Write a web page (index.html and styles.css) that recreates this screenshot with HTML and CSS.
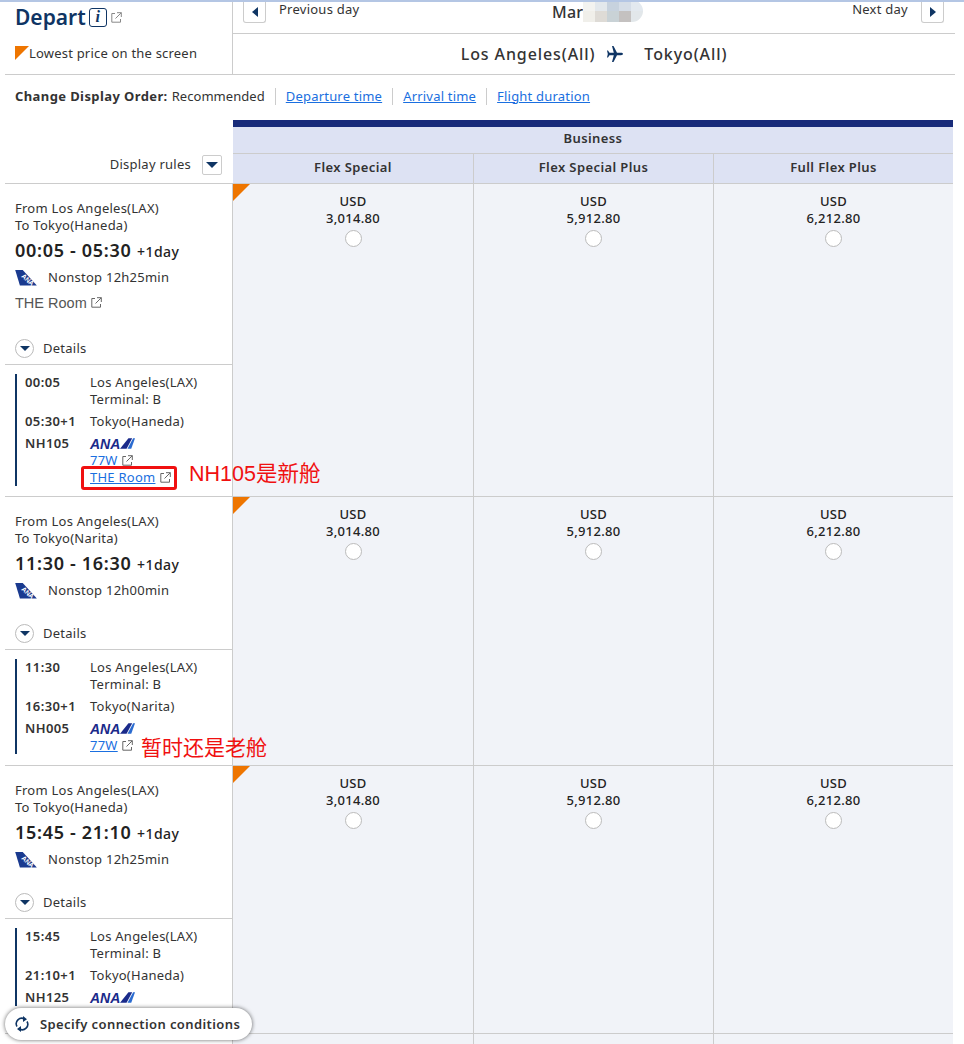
FILE: index.html
```html
<!DOCTYPE html>
<html lang="en">
<head>
    <meta charset="UTF-8">
    <meta name="viewport" content="width=device-width, initial-scale=1.0">
    <title>Select flights</title>
    <link rel="stylesheet" href="styles.css">
</head>
<body>
<div class="page">

    <div class="top">
        <div class="top-left">
            <div class="depart">
                <h1>Depart</h1>
                <span class="info-btn">i</span>
                <svg class="ext ext-pale" viewBox="0 0 11 11"><path d="M4 1.500H.8v8.700h8.700V7M6 .7h4.300V5M10.300.7 4.500 6.500"/></svg>
            </div>
            <div class="legend"><span class="corner corner-small"></span>Lowest price on the screen</div>
        </div>
        <div class="top-right">
            <div class="day-nav">
                <div class="day-prev"><span class="day-btn"><span class="arrow-left"></span></span>Previous day</div>
                <div class="day-now">Mar</div>
                <div class="day-next">Next day<span class="day-btn"><span class="arrow-right"></span></span></div>
            </div>
            <div class="route">
                <span>Los Angeles(All)</span>
                <svg class="plane" viewBox="0 0 16 16"><path d="M16 8c0-.7-1-1.200-2-1.200H10L6.500 0H5l1.800 6.800H2.500L1 4.500H0l.8 3.500L0 11.500h1l1.500-2.300h4.300L5 16h1.500L10 9.200h4c1 0 2-.5 2-1.200z"/></svg>
                <span>Tokyo(All)</span>
            </div>
        </div>
    </div>

    <!-- blurred date -->
    <div class="mosaic">
        <i class="m1"></i><i class="m2"></i><i class="m3"></i><i class="m4"></i><i class="m5"></i>
        <i class="m6"></i><i class="m7"></i><i class="m8"></i><i class="m9"></i><i class="m10"></i>
    </div>

    <div class="order">
        <b>Change Display Order:</b>
        <span class="order-item order-first">Recommended</span>
        <a href="#" class="order-item">Departure time</a>
        <a href="#" class="order-item">Arrival time</a>
        <a href="#" class="order-item order-last">Flight duration</a>
    </div>

    <div class="thead">
        <div class="rules">Display rules<span class="rules-btn"><span class="arrow-down"></span></span></div>
        <div class="thead-right">
            <div class="cabin">Business</div>
            <div class="fares">
                <div>Flex Special</div>
                <div>Flex Special Plus</div>
                <div>Full Flex Plus</div>
            </div>
        </div>
    </div>

    <!-- NH105 -->
    <div class="flight flight-tall">
        <div class="info">
            <div class="summary">
                <p>From Los Angeles(LAX)<br>To Tokyo(Haneda)</p>
                <div class="times">00:05 - 05:30 <small>+1day</small></div>
                <div class="carrier">
                    <svg class="tail" viewBox="0 0 24 17"><path d="M0 0h8l15 16.500H5z"/><text x="7" y="9" transform="rotate(42 9 7)">ANA</text></svg>
                    Nonstop 12h25min
                </div>
                <div class="room">THE Room <svg class="ext" viewBox="0 0 11 11"><path d="M4 1.500H.8v8.700h8.700V7M6 .7h4.300V5M10.300.7 4.500 6.500"/></svg></div>
                <div class="toggle"><span class="toggle-btn"><span class="arrow-down"></span></span>Details</div>
            </div>
            <div class="legs">
                <div class="leg"><b>00:05</b><span>Los Angeles(LAX)<br>Terminal: B</span></div>
                <div class="leg leg-arr"><b>05:30+1</b><span>Tokyo(Haneda)</span></div>
                <div class="leg leg-arr">
                    <b>NH105</b>
                    <div>
                        <div class="ana"><span>ANA</span><svg viewBox="0 0 16 11"><path d="M8 11 14 0h2l-4 11z" fill="#2a6bd0"/><path d="M0 11 9 0h4L7 11z" fill="#1a2a8a"/></svg></div>
                        <div class="plane-link"><a href="#">77W</a> <svg class="ext" viewBox="0 0 11 11"><path d="M4 1.500H.8v8.700h8.700V7M6 .7h4.300V5M10.300.7 4.500 6.500"/></svg></div>
                        <div class="plane-link"><a href="#">THE Room</a> <svg class="ext" viewBox="0 0 11 11"><path d="M4 1.500H.8v8.700h8.700V7M6 .7h4.300V5M10.300.7 4.500 6.500"/></svg></div>
                    </div>
                </div>
            </div>
        </div>
        <div class="price best">USD<br>3,014.80<span class="radio"></span></div>
        <div class="price">USD<br>5,912.80<span class="radio"></span></div>
        <div class="price">USD<br>6,212.80<span class="radio"></span></div>
    </div>

    <!-- NH005 -->
    <div class="flight flight-mid">
        <div class="info">
            <div class="summary summary-short">
                <p>From Los Angeles(LAX)<br>To Tokyo(Narita)</p>
                <div class="times">11:30 - 16:30 <small>+1day</small></div>
                <div class="carrier">
                    <svg class="tail" viewBox="0 0 24 17"><path d="M0 0h8l15 16.500H5z"/><text x="7" y="9" transform="rotate(42 9 7)">ANA</text></svg>
                    Nonstop 12h00min
                </div>
                <div class="toggle"><span class="toggle-btn"><span class="arrow-down"></span></span>Details</div>
            </div>
            <div class="legs">
                <div class="leg"><b>11:30</b><span>Los Angeles(LAX)<br>Terminal: B</span></div>
                <div class="leg leg-arr"><b>16:30+1</b><span>Tokyo(Narita)</span></div>
                <div class="leg leg-arr">
                    <b>NH005</b>
                    <div>
                        <div class="ana"><span>ANA</span><svg viewBox="0 0 16 11"><path d="M8 11 14 0h2l-4 11z" fill="#2a6bd0"/><path d="M0 11 9 0h4L7 11z" fill="#1a2a8a"/></svg></div>
                        <div class="plane-link"><a href="#">77W</a> <svg class="ext" viewBox="0 0 11 11"><path d="M4 1.500H.8v8.700h8.700V7M6 .7h4.300V5M10.300.7 4.500 6.500"/></svg></div>
                    </div>
                </div>
            </div>
        </div>
        <div class="price best">USD<br>3,014.80<span class="radio"></span></div>
        <div class="price">USD<br>5,912.80<span class="radio"></span></div>
        <div class="price">USD<br>6,212.80<span class="radio"></span></div>
    </div>

    <!-- NH125 -->
    <div class="flight flight-last">
        <div class="info">
            <div class="summary summary-short">
                <p>From Los Angeles(LAX)<br>To Tokyo(Haneda)</p>
                <div class="times">15:45 - 21:10 <small>+1day</small></div>
                <div class="carrier">
                    <svg class="tail" viewBox="0 0 24 17"><path d="M0 0h8l15 16.500H5z"/><text x="7" y="9" transform="rotate(42 9 7)">ANA</text></svg>
                    Nonstop 12h25min
                </div>
                <div class="toggle"><span class="toggle-btn"><span class="arrow-down"></span></span>Details</div>
            </div>
            <div class="legs">
                <div class="leg"><b>15:45</b><span>Los Angeles(LAX)<br>Terminal: B</span></div>
                <div class="leg leg-arr"><b>21:10+1</b><span>Tokyo(Haneda)</span></div>
                <div class="leg leg-arr">
                    <b>NH125</b>
                    <div>
                        <div class="ana"><span>ANA</span><svg viewBox="0 0 16 11"><path d="M8 11 14 0h2l-4 11z" fill="#2a6bd0"/><path d="M0 11 9 0h4L7 11z" fill="#1a2a8a"/></svg></div>
                    </div>
                </div>
            </div>
        </div>
        <div class="price best">USD<br>3,014.80<span class="radio"></span></div>
        <div class="price">USD<br>5,912.80<span class="radio"></span></div>
        <div class="price">USD<br>6,212.80<span class="radio"></span></div>
    </div>

    <div class="flight flight-empty">
        <div class="info"></div>
        <div class="price"></div>
        <div class="price"></div>
        <div class="price"></div>
    </div>

    <!-- hand-written notes on top of the list -->
    <div class="note-box"></div>
    <div class="note note-new">NH105是新舱</div>
    <div class="note note-old">暂时还是老舱</div>

    <div class="connect">
        <svg viewBox="0 0 14 16"><path d="M2 10.500A5.500 5.500 0 0 1 9.500 3M12 5.500A5.500 5.500 0 0 1 4.500 13"/><path class="tip" d="M8 0l4 3.300L8 6zM6 10l-4 3 4 3z"/></svg>
        Specify connection conditions
    </div>
</div>
</body>
</html>
```

FILE: styles.css
```css
* {
  box-sizing: border-box;
}

body {
  margin: 0;
  font-family: "Noto Sans", "Noto Sans CJK SC", sans-serif;
  font-size: 13px;
  letter-spacing: 0.25px;
  color: #333;
  background: #fff;
}

a {
  color: #1a6fe0;
}

b {
  letter-spacing: 0.4px;
}

p {
  margin: 0;
}

.page {
  position: relative;
  height: 1044px;
  padding-left: 5px;
  border-top: 2px solid #b4c6e4;
  overflow: hidden;
}

/* top block */
.top {
  display: flex;
  width: 950px;
  height: 73px;
  border-bottom: 1px solid #ccc;
}

.top-left {
  width: 228px;
  padding: 0 0 0 10px;
  border-right: 1px solid #ccc;
}

.depart {
  display: flex;
  align-items: center;
  height: 30px;
}

h1 {
  margin: 0 3px 0 0;
  font-size: 21px;
  font-weight: 600;
  letter-spacing: 0;
  color: #0f3564;
}

.info-btn {
  width: 18px;
  height: 19px;
  border: 1.5px solid #0f3564;
  border-radius: 3px;
  font: italic bold 16px/16px "Liberation Serif", serif;
  text-align: center;
  color: #0f3564;
}

.ext {
  width: 11px;
  height: 11px;
  fill: none;
  stroke: #666;
  stroke-width: 1;
}

.ext-pale {
  margin-left: 4px;
  stroke: #888;
}

.legend {
  display: flex;
  align-items: center;
  margin-top: 12px;
  letter-spacing: 0.2px;
  color: #333;
}

.corner {
  display: block;
  width: 0;
  height: 0;
  border-top: 17px solid #ee7500;
  border-right: 17px solid transparent;
}

.corner-small {
  border-top-width: 14px;
  border-right-width: 14px;
}

.top-right {
  flex: 1;
}

.day-nav {
  position: relative;
  display: flex;
  justify-content: space-between;
  height: 32px;
  padding: 0 11px 0 10px;
  border-bottom: 1px solid #ccc;
}

.day-prev,
.day-next {
  display: flex;
  align-items: flex-start;
  gap: 13px;
  line-height: 14px;
}

.day-btn {
  display: flex;
  align-items: center;
  justify-content: center;
  width: 23px;
  height: 21px;
  border: 1px solid #ccc;
  border-top: none;
  border-radius: 0 0 3px 3px;
}

.arrow-left {
  border-top: 5px solid transparent;
  border-bottom: 5px solid transparent;
  border-right: 6px solid #0f3564;
}

.arrow-right {
  border-top: 5px solid transparent;
  border-bottom: 5px solid transparent;
  border-left: 6px solid #0f3564;
}

.arrow-down {
  border-left: 6px solid transparent;
  border-right: 6px solid transparent;
  border-top: 6px solid #0f3564;
}

.day-now {
  position: absolute;
  left: 319px;
  top: 0;
  font-size: 16px;
  font-weight: 500;
  line-height: 20px;
}

.route {
  display: flex;
  align-items: center;
  justify-content: center;
  gap: 14px;
  height: 40px;
  font-size: 16px;
  font-weight: 500;
  letter-spacing: 0.9px;
}

.plane {
  width: 16px;
  height: 16px;
  margin: 0 7px 0 -2px;
  fill: #0f3564;
}

.mosaic {
  position: absolute;
  left: 583px;
  top: -2px;
  display: grid;
  grid-template-columns: repeat(5, 12px);
  grid-template-rows: repeat(2, 11px);
  border-radius: 0 14px 14px 0;
  overflow: hidden;
}

.m1 { background: #f3f3f0; }
.m2 { background: #e3e8ec; }
.m3 { background: #c7d2de; }
.m4 { background: #d5dde7; }
.m5 { background: #e3e9ef; }
.m6 { background: #f0efea; }
.m7 { background: #dedbd6; }
.m8 { background: #c9d2d6; }
.m9 { background: #c4c1c0; }
.m10 { background: #e2e7ea; }

/* sort order */
.order {
  display: flex;
  align-items: center;
  height: 45px;
  padding: 0 0 3px 10px;
}

.order b {
  margin-right: 4px;
}

.order-item {
  padding-right: 10px;
  margin-right: 10px;
  border-right: 1px solid #ccc;
  letter-spacing: 0.05px;
  line-height: 17px;
}

a.order-item {
  letter-spacing: 0.2px;
}

.order-last {
  border-right: none;
}

/* table head */
.thead {
  display: flex;
  width: 948px;
  height: 64px;
}

.rules {
  display: flex;
  align-items: flex-start;
  justify-content: flex-end;
  gap: 11px;
  width: 228px;
  padding: 35px 11px 0 0;
  line-height: 19px;
  border-bottom: 1px solid #ccc;
}

.rules-btn {
  display: flex;
  align-items: center;
  justify-content: center;
  width: 20px;
  height: 20px;
  border: 1px solid #ccc;
  border-radius: 2px;
}

.thead-right {
  flex: 1;
  border-top: 7px solid #182b7a;
  background: #dde2f3;
  font-weight: 600;
  letter-spacing: 0.4px;
  text-align: center;
}

.cabin {
  height: 27px;
  line-height: 22px;
  border-bottom: 1px solid #ccc;
}

.fares {
  display: grid;
  grid-template-columns: 241px 240px 239px;
  height: 30px;
  line-height: 26px;
  border-bottom: 1px solid #ccc;
}

.fares div {
  border-right: 1px solid #ccc;
}

.fares div:last-child {
  border-right: none;
}

/* flight rows */
.flight {
  display: grid;
  grid-template-columns: 228px 241px 240px 239px;
  width: 948px;
  border-bottom: 1px solid #ccc;
}

.flight-tall {
  height: 313px;
}

.flight-mid {
  height: 269px;
}

.flight-last {
  height: 268px;
}

.flight-empty {
  height: 60px;
}

.info {
  border-right: 1px solid #ccc;
}

.summary {
  position: relative;
  height: 181px;
  padding: 16px 0 0 10px;
  border-bottom: 1px solid #ccc;
  line-height: 17px;
}

.summary-short {
  height: 153px;
}

.times {
  margin-top: 4px;
  font-size: 18px;
  font-weight: 600;
  letter-spacing: 0.7px;
  line-height: 24px;
  color: #222;
}

.times small {
  font-size: 14px;
  font-weight: 500;
  letter-spacing: 0.5px;
}

.carrier {
  display: flex;
  align-items: center;
  gap: 10px;
  height: 17px;
  margin-top: 5px;
}

.tail {
  width: 23px;
  height: 16px;
  fill: #1a3a8f;
}

.tail text {
  font: bold 7px "Liberation Sans", sans-serif;
  fill: #fff;
  letter-spacing: 0;
}

.room {
  margin-top: 9px;
  font-family: "Liberation Sans", sans-serif;
  font-size: 14.5px;
  letter-spacing: 0;
  color: #555;
}

.toggle {
  position: absolute;
  left: 10px;
  bottom: 6px;
  display: flex;
  align-items: center;
  gap: 9px;
}

.toggle-btn {
  display: flex;
  align-items: center;
  justify-content: center;
  width: 19px;
  height: 19px;
  border: 1px solid #bbb;
  border-radius: 50%;
}

.toggle-btn .arrow-down {
  border-left-width: 5px;
  border-right-width: 5px;
  border-top-width: 5px;
}

.legs {
  margin: 11px 0 0 10px;
  padding-left: 8px;
  border-left: 2px solid #0f3564;
  line-height: 17px;
}

.leg {
  display: grid;
  grid-template-columns: 65px 1fr;
}

.leg:first-child {
  margin-top: -2px;
}

.leg b {
  font-weight: 600;
}

.leg-arr {
  margin-top: 5px;
}

.ana {
  display: flex;
  align-items: center;
  height: 17px;
}

.ana span {
  font: italic bold 14px "Liberation Sans", sans-serif;
  letter-spacing: 0;
  color: #1a2a8a;
}

.ana svg {
  width: 15px;
  height: 11px;
}

.plane-link a {
  margin-right: 1px;
}

.plane-link .ext {
  vertical-align: -1px;
}

.price {
  padding-top: 9px;
  background: #f1f3f8;
  border-right: 1px solid #ccc;
  color: #222;
  font-weight: 500;
  letter-spacing: 0.3px;
  line-height: 17px;
  text-align: center;
}

.price:last-child {
  border-right: none;
}

.best {
  position: relative;
}

.best::before {
  content: "";
  position: absolute;
  left: 0;
  top: 0;
  border-top: 17px solid #ee7500;
  border-right: 17px solid transparent;
}

.radio {
  display: block;
  width: 17px;
  height: 17px;
  margin: 3px auto 0;
  border: 1px solid #bbb;
  border-radius: 50%;
  background: #fff;
}

/* notes */
.note-box {
  position: absolute;
  left: 81px;
  top: 464px;
  width: 96px;
  height: 24px;
  border: 3px solid #f01010;
  border-radius: 3px;
}

.note {
  position: absolute;
  font-family: "Liberation Sans", "Noto Sans CJK SC", sans-serif;
  font-size: 21px;
  letter-spacing: 0;
  color: #f01010;
  line-height: 26px;
}

.note-new {
  left: 189px;
  top: 459px;
  font-size: 21.5px;
}

.note-old {
  left: 141px;
  top: 733px;
}

/* floating button */
.connect {
  position: absolute;
  left: 5px;
  top: 1006px;
  display: flex;
  align-items: center;
  gap: 11px;
  height: 32px;
  padding: 0 12px 0 10px;
  background: #fff;
  border-radius: 16px;
  box-shadow: 0 0 4px rgba(0, 0, 0, 0.6);
  font-weight: 600;
  letter-spacing: 0.4px;
  color: #333;
}

.connect svg {
  width: 14px;
  height: 16px;
  fill: none;
  stroke: #0f3564;
  stroke-width: 1.6;
}

.connect .tip {
  fill: #0f3564;
  stroke: none;
}
```
